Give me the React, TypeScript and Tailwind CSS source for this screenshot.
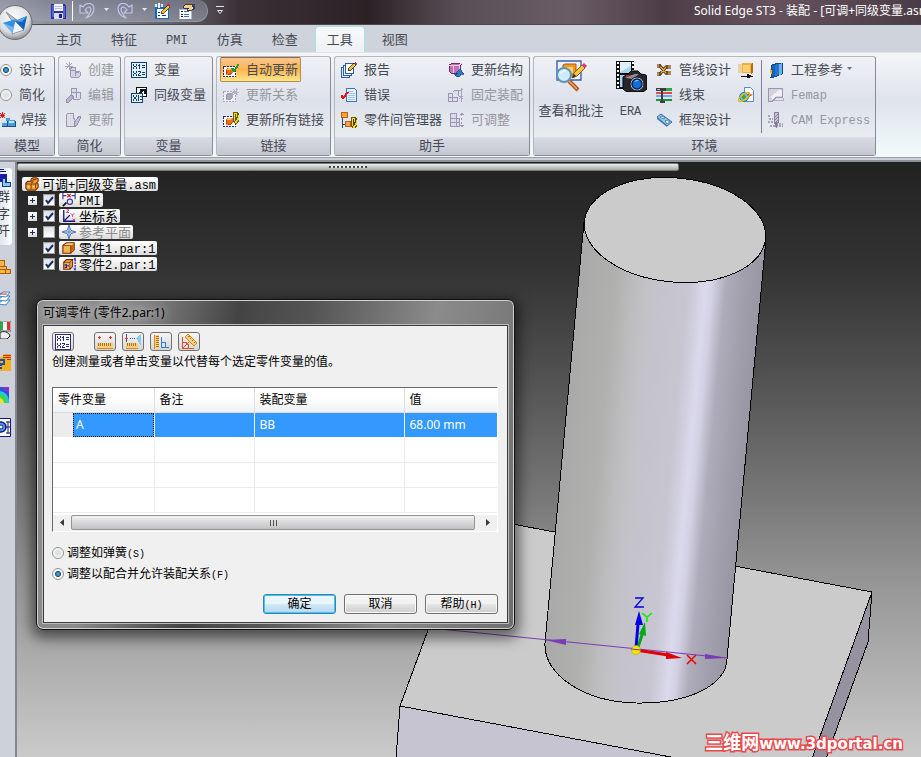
import React from "react";
import clsx from "clsx";

const UI_FONT = "font-['Noto_Sans','Noto_Sans_CJK_SC',sans-serif]";

// Latin runs use a half-width mono face next to the full-width CJK glyphs
const Mixed = ({ text, small }: { text: string; small?: boolean }) => (
  <>
    {text.split(/([\x20-\x7e]+)/).map((part, i) =>
      i % 2 === 1 ? (
        <span key={i} className={clsx("whitespace-pre font-['Liberation_Mono',monospace]", small ? "text-[10px]" : "text-[12px]")}>
          {part}
        </span>
      ) : (
        <React.Fragment key={i}>{part}</React.Fragment>
      )
    )}
  </>
);

const Icon = ({ children, size = 16, box = 16 }: { children: React.ReactNode; size?: number; box?: number }) => (
  <svg
    width={size}
    height={size}
    viewBox={`0 0 ${box} ${box}`}
    shapeRendering={box === 16 && size === 16 ? "crispEdges" : "auto"}
    className="shrink-0"
    fill="none"
    aria-hidden="true"
  >
    {children}
  </svg>
);

/* ---------- quick access icons ---------- */

const SaveIcon = () => (
  <Icon>
    <path d="M1 1h13l2 2v13H1z" fill="#2a30a8" />
    <path d="M2 2h2v12H2zM13 3h2v12h-2z" fill="#5a62d8" />
    <path d="M4 1h9v7H4z" fill="#f4f6ff" />
    <path d="M5 3.500h7M5 5.500h7" stroke="#b9bfe4" />
    <path d="M4 10h9v6H4z" fill="#d9dcf0" />
    <path d="M9 11h3v4H9z" fill="#1c1f86" />
  </Icon>
);

const UndoIcon = ({ flip }: { flip?: boolean }) => (
  <svg width="16" height="16" viewBox="0 0 16 16" fill="none" aria-hidden="true">
    <g transform={flip ? "translate(16 0) scale(-1 1)" : undefined} stroke="#c4c6de" strokeLinejoin="round">
      <path d="M1 2v8h8l-3-3c2-3 5-4 6-1 0 3-1 5-5 9 6-2 8-6 8-10-1-6-8-6-11-1z" fill="#80829f" strokeWidth="1.200" />
    </g>
  </svg>
);

const Caret = ({ className }: { className?: string }) => (
  <svg width="7" height="5" viewBox="0 0 7 5" className={className} aria-hidden="true">
    <path d="M1 0h5L3.500 3z" fill="currentColor" />
  </svg>
);

const SketchListIcon = () => (
  <Icon>
    <path d="M1 4h14v12H1z" fill="#1467c8" />
    <path d="M3 6h11v9H3z" fill="#fff" />
    <path d="M1 1h2v3H1zM4 0h2v5H4zM7 1h2v3H7z" fill="#e4f2fc" />
    <path d="M4 9.500h2M4 12.500h2M8 12.500h4" stroke="#123a7a" />
    <path d="M7 11l1-3 6-6 2 2-6 6z" fill="#f2c443" stroke="#4a2a08" strokeWidth=".8" />
    <path d="M13 2l1-2 2 1v2z" fill="#d92a7a" />
  </Icon>
);

const HandPropsIcon = () => (
  <Icon>
    <path d="M0 6h12v10H0z" fill="#fff" stroke="#a4bce4" />
    <path d="M2 8.500h2M2 11.500h2M2 13.500h2" stroke="#111" strokeWidth="1" />
    <path d="M5 8.500h5M5 11.500h5M5 13.500h5" stroke="#2f6fd6" strokeWidth="1" />
    <path d="M4 4l3-3h6l2 1v4l-4 2-3-1 2-2H5z" fill="#f0cf95" stroke="#3a2a14" strokeWidth=".9" />
    <path d="M13 1h3v5h-2z" fill="#3c3c64" />
  </Icon>
);

/* ---------- ribbon icons ---------- */

const WeldIcon = () => (
  <Icon>
    <path d="M6 4h4v4h5v6H2V9h4z" fill="#4f9ad8" />
    <path d="M6 4h4v2H6zM2 9h5v2H2zM9 9h5v2H9z" fill="#c2e6fb" />
    <path d="M2 14.500h13M7.500 9v5M15.500 9v6" stroke="#1d4f94" />
    <path d="M2.500 0v6M0 3.500h5M0 1l5 5M5 1L0 6" stroke="#e01818" />
  </Icon>
);

const CreateIcon = () => (
  <Icon>
    <path d="M5 7l2-2h3v4h4l1 1v4l-1 1H6z" fill="#d5d2e2" stroke="#9b97b2" />
    <path d="M6 8h4v6M10 10h4" stroke="#9b97b2" />
    <path d="M4 0v8M0 4h8M1 1l6 6M7 1L1 7" stroke="#a7a3bd" />
  </Icon>
);

const EditIcon = () => (
  <Icon>
    <path d="M6 1h5v4h4v7l-5 1-4-3z" fill="#dddaea" stroke="#9b97b2" />
    <path d="M6 5h5v6M11 6l4-1" stroke="#9b97b2" />
    <path d="M1 13l5-5 3 2-5 5-3 1z" fill="#b7b3ca" stroke="#9590ad" />
  </Icon>
);

const RefreshIcon = () => (
  <Icon>
    <path d="M1 3l2-2h5v4l2 3v6H1z" fill="#dddaea" stroke="#9b97b2" />
    <path d="M9 11l5-7 2 1-4 8-3 2z" fill="#c3bfd4" stroke="#9590ad" />
  </Icon>
);

const VariablesIcon = ({ color = "#123c6e", fill = "#dff2fb" }: { color?: string; fill?: string }) => (
  <Icon>
    <path d="M.5.5h15v15H.5z" fill={fill} stroke={color} />
    <g fill={color}>
      <path d="M2 2h1v2H2zM5 2h1v2H5zM3 4h2v1H3zM2 5h1v2H2zM5 5h1v2H5zM8 2h1v5H8zM7 3h1v1H7zM11 3h3v1h-3zM11 5h3v1h-3z" />
      <path d="M2 9h1v2H2zM5 9h1v2H5zM3 11h2v1H3zM2 12h1v2H2zM5 12h1v2H5zM7 9h3v1H7zM9 10h1v1H9zM8 11h1v1H8zM7 12h1v1H7zM7 13h3v1H7zM11 10h3v1h-3zM11 12h3v1h-3z" />
    </g>
  </Icon>
);

const PeerVariablesIcon = () => (
  <Icon>
    <path d="M5.500.5h10v9h-10z" fill="#fff" stroke="#111" />
    <path d="M8 7l4-4M9 2.500h4.500V7" stroke="#111" strokeWidth="2" />
    <path d="M.5 6.500h11v9H.5z" fill="#dff2fb" stroke="#123c6e" />
    <path
      d="M2 8h1v2H2zM5 8h1v2H5zM3 10h2v2H3zM2 12h1v2H2zM5 12h1v2H5zM7 8h1v6H7zM9 9h2v1H9zM9 12h2v1H9z"
      fill="#123c6e"
    />
  </Icon>
);

const LinkCubeIcon = ({ kind }: { kind: "check" | "star" | "chain" }) => {
  const off = kind === "star";
  return (
    <Icon>
      <path d="M.5 4.500h12v10H.5z" stroke={off ? "#a9a5bd" : "#2a2a66"} strokeDasharray="2 1" fill={off ? "#efedf5" : "#fff"} />
      <path d="M3 8l2-2h4v5l-2 2-4-1z" fill={off ? "#a9a5bd" : "#ef6b14"} stroke={off ? "#9590ad" : "#b33c05"} strokeWidth=".7" />
      {!off && <path d="M3 8l2-2h4L7 8z" fill="#ffc36a" />}
      {kind === "check" && <path d="M9 6l2 3 5-7" stroke="#1e9b2c" strokeWidth="2" />}
      {kind === "star" && <path d="M13 1v7M9 5h7M10 2l5 6M15 2l-5 6" stroke="#b3afc6" />}
      {kind === "chain" && (
        <g stroke="#6a5600">
          <path d="M11 0h3l2 3v5l-2 3h-2l-2-3V3z" fill="#f3dc28" />
          <path d="M12 2l2 6M14 2v4M12 5v4" />
        </g>
      )}
    </Icon>
  );
};

const ReportIcon = () => (
  <Icon>
    <path d="M.5 5.500h8v10h-8z" fill="#dcecfb" stroke="#2a5caa" />
    <path d="M2.500 3.500h8v10h-8z" fill="#eef6fd" stroke="#2a5caa" />
    <path d="M4.500 1.500h8v10h-8z" fill="#fff" stroke="#2a5caa" />
    <path d="M7 9l1-3 5-5 2 2-5 5z" fill="#f3c33e" stroke="#222" strokeWidth=".8" />
    <path d="M13 1l1-1 2 2-1 1z" fill="#d12a6a" />
  </Icon>
);

const ErrorsIcon = () => (
  <Icon>
    <path d="M5.500 1.500h8l2 2v11h-10z" fill="#eaf3fd" stroke="#3a74c2" />
    <path d="M7 4.500h5M7 6.500h7M7 8.500h7M7 10.500h7M7 12.500h7" stroke="#9ec2ec" />
    <path d="M0 8l2 3 5-6" stroke="#e21414" strokeWidth="2" />
  </Icon>
);

const InterpartIcon = () => (
  <Icon>
    <path d="M.5.5h6v5h-6zM4.500 9.500h5v5h-5z" fill="#f7a13a" stroke="#c05f08" />
    <path d="M1.500 6v10M2 12.500h2" stroke="#1c3f96" />
    <path d="M11 5h3l2 3v5l-2 3h-2l-2-3V8z" fill="#f3dc28" stroke="#6a5600" />
    <path d="M12 7l2 6M14 7v4M12 10v4" stroke="#4a3c00" />
  </Icon>
);

const UpdateStructIcon = () => (
  <Icon>
    <path d="M1 3l4-2h9l-2 3v7H3L1 9z" fill="#c772b0" stroke="#6b2c72" />
    <path d="M1 3h10l3-2M5 3v8M11 3v8" stroke="#f2c9e6" />
    <path d="M6 11c2 6 6 4 7 1h3l-4-5-4 4h2c-1 2-3 2-4 0z" fill="#2f7ad0" stroke="#123a7a" strokeWidth=".7" />
  </Icon>
);

const FixedAsmIcon = () => (
  <Icon>
    <path d="M.5 6.500h4v4h5v4h-9zM.5 10.500h4v4M5 5l2-2h3v6" stroke="#9b97b2" fill="#dddaea" />
    <path d="M13.500 1v14M11 4l4-2M11 9l4 3M15 9l-4 3" stroke="#a7a3bd" />
  </Icon>
);

const AdjustableIcon = () => (
  <Icon>
    <path d="M2 2l2-1h4v5h3v8H2zM2 6h6v8M2 10h9" stroke="#9b97b2" fill="#dddaea" />
    <path d="M13.500 2v13" stroke="#9b97b2" strokeDasharray="2 2" />
    <path d="M12 3l2-3 2 3zM12 13l2 3 2-3z" fill="#9b97b2" />
  </Icon>
);

const ReviewIcon = () => (
  <Icon size={32} box={32}>
    <path d="M2 1h24v19H2z" fill="#eef2fb" stroke="#3c5fb4" strokeWidth="1.400" />
    <path d="M8 5l2-1h11v9l-2 2H8z" fill="#f29a1c" stroke="#b05a08" />
    <path d="M10 7h8v6h-8z" fill="#ffd27a" />
    <path d="M17 18l2-5 8-8 3 3-8 8z" fill="#f2c443" stroke="#8a5a12" />
    <path d="M27 5l2-2 3 3-2 2z" fill="#e0377c" />
    <path d="M17 18l2-4 2 2z" fill="#222" />
    <path d="M14 21l9 9" stroke="#b2531a" strokeWidth="4" />
    <path d="M14 21l8 8" stroke="#f3a765" strokeWidth="1.500" />
    <circle cx="9" cy="15" r="7" fill="#cfeaf8" stroke="#5f93b8" strokeWidth="2" />
    <path d="M5 14c1-4 5-5 7-3-3 0-5 1-7 3z" fill="#fff" />
  </Icon>
);

const EraIcon = () => (
  <Icon size={32} box={32}>
    <path d="M1 1h18v28H1z" fill="#111" />
    <path d="M5 2h11v11H5zM5 15h11v12H5z" fill="#a8d4f4" />
    <path d="M5 2h11v4L5 12z" fill="#dff0fc" />
    <path d="M3 2v27M18 2v27" stroke="#fff" strokeWidth="2" strokeDasharray="2 2" />
    <path d="M8 17l5-3 3-3h7l3 3 5 1 1 3v11l-4 3H12l-4-3z" fill="#26262a" stroke="#000" />
    <path d="M10 18l4-2 6-2h4l-6 5z" fill="#8d8f96" />
    <path d="M11 16h3" stroke="#d22" strokeWidth="2" />
    <circle cx="22" cy="24" r="7" fill="#c9ccd2" stroke="#111" />
    <circle cx="22" cy="24" r="5" fill="#0f6fd6" stroke="#06245c" strokeWidth="1.500" />
    <path d="M19 22c1-2 4-2 5-1-2 0-4 0-5 1z" fill="#bfe6ff" />
  </Icon>
);

const PipingIcon = () => (
  <svg width="16" height="16" viewBox="0 0 16 16" fill="none" className="shrink-0" aria-hidden="true">
    <path d="M1 4h3l6 7h5M1 12h3l6-7h5" stroke="#3a2004" strokeWidth="3" />
    <path d="M1 4h3l6 7h5M1 12h3l6-7h5" stroke="#f0a848" strokeWidth="1.400" />
    <path d="M4 2v3M11 3v4M11 9v4M4 10v4" stroke="#2a1804" />
  </svg>
);

const HarnessIcon = () => (
  <Icon>
    <path d="M6 1h10v3H6z" fill="#2aa84a" />
    <path d="M0 5h16v2H0z" fill="#e84a4a" />
    <path d="M0 8h16v2H0z" fill="#6aaef0" />
    <path d="M0 12h16v2H0z" fill="#1d8f36" />
    <path d="M0 1h10v3H7v10h2v2H4v-2h1V4H0z" fill="#3a3e40" />
    <path d="M1 2h3v1H1z" fill="#b8bcc0" />
  </Icon>
);

const FrameIcon = () => (
  <svg width="16" height="16" viewBox="0 0 16 16" fill="none" className="shrink-0" aria-hidden="true">
    <path d="M1 5l4-3 11 8-5 4z" fill="#9cc8e8" stroke="#2f6ea8" />
    <path d="M1 5v2l10 8v-2z" fill="#3a7cb8" />
    <path d="M4 5l2-1 3 2-2 1zM9 9l2-1 3 2-3 2z" fill="#f2faff" stroke="#2f6ea8" strokeWidth=".8" />
  </svg>
);

const ExplodeIcon = () => (
  <Icon>
    <path d="M0 2h10v9H0z" fill="#ead2a8" />
    <path d="M4 1h10v10H4z" fill="#f2b040" />
    <path d="M5 3h7v7H5z" fill="#fbd070" />
    <path d="M13 2l2-2v10l-2 2z" fill="#b96a10" />
    <path d="M3 14.500h9M9 12l5 2.500-5 1.500z" stroke="#111" fill="#111" strokeWidth="1" />
  </Icon>
);

const WebIcon = () => (
  <svg width="16" height="16" viewBox="0 0 16 16" fill="none" className="shrink-0" aria-hidden="true">
    <path d="M6.500.5h6l3 3v11h-9z" fill="#fff" stroke="#5a86c6" />
    <path d="M11 5l1 2 3 1-3 1-1 2-1-2-2-1 2-1z" fill="#d02828" />
    <circle cx="6" cy="10" r="4.500" fill="#5cc4e8" stroke="#2a76b0" />
    <path d="M3 8l3-1 2 3-2 3-2-2z" fill="#3aa63a" />
    <ellipse cx="6" cy="10" rx="6.500" ry="2.500" transform="rotate(-35 6 10)" stroke="#e8b818" strokeWidth="1.500" />
  </svg>
);

const HandbookIcon = () => (
  <Icon>
    <path d="M4 3l7-2h3v11l-8 3H3z" fill="#2275cc" stroke="#124a92" />
    <path d="M4 3h3v12H4z" fill="#1a5fb4" />
    <path d="M11 2l3-1v11l-3 1z" fill="#6cb2ee" />
    <path d="M2 7l2 2v4l-2-2z" fill="#f2b41c" />
  </Icon>
);

const FemapIcon = () => (
  <Icon>
    <path d="M.5 1.500h14v9H8l-4 4H.5z" fill="#d4d0de" stroke="#9b97b2" />
    <path d="M3 9l8-6h3v6H8l-4 4z" fill="#f1eff6" />
    <path d="M6 13.500h9V11" stroke="#b3afc6" />
  </Icon>
);

const CamIcon = () => (
  <Icon>
    <path d="M6.500.5h4v10h-4z" fill="#c9c5d8" stroke="#86829c" />
    <path d="M6 5l5-3M6 8l5-3M6 11l5-3" stroke="#86829c" />
    <path d="M0 3.500h3M1 6.500h4M0 9.500h5M11 11.500h4M2 13.500h13" stroke="#a7a3bd" strokeWidth="2" strokeDasharray="2 1" />
    <path d="M6 10h5l-2 6H8z" fill="#86829c" />
  </Icon>
);

/* ---------- tree icons ---------- */

const AsmIcon = () => (
  <Icon size={14}>
    <path d="M1 7l2-2h4V2l2-1h4l2 1v3l-2 2 2 1v4l-3 3H3l-2-2z" fill="#f0a030" stroke="#7a2e06" strokeWidth="1.300" />
    <path d="M1 8h6v6M7 8h6M9 3h4M7 7l2-1V3M12 8v5" stroke="#7a2e06" />
    <path d="M3 10h2v2H3zM9 10h2v2H9z" fill="#ffd98a" />
  </Icon>
);

const PmiIcon = () => (
  <Icon size={14}>
    <path d="M1 0v7M15 0v7M1 3h4M11 3h4" stroke="#3a3aa0" strokeWidth="1.300" />
    <path d="M6 1l4 4M10 1L6 5" stroke="#d01818" strokeWidth="1.300" />
    <circle cx="9" cy="10" r="3" stroke="#3a3aa0" strokeWidth="1.300" />
    <path d="M1 15l4-4" stroke="#111" strokeWidth="2" />
  </Icon>
);

const AxesIcon = () => (
  <Icon size={14}>
    <path d="M2 1v13h13" stroke="#14147a" strokeWidth="1.500" />
    <path d="M2 14l7-7" stroke="#14147a" strokeWidth="1.500" />
    <path d="M5 1h3L5 4h3" stroke="#c02878" />
    <path d="M10 5l2 2 2-2M12 7v2M12 11l3 3M15 11l-3 3" stroke="#c02878" />
  </Icon>
);

const PlanesIcon = () => (
  <Icon size={14}>
    <path d="M8 0l2 6 6 2-6 2-2 6-2-6-6-2 6-2z" fill="#d8ecfb" stroke="#4a72b4" />
    <path d="M8 1v14M1 8h14" stroke="#4a72b4" />
  </Icon>
);

const PartIcon = ({ adjustable }: { adjustable?: boolean }) =>
  adjustable ? (
    <Icon size={14}>
      <path d="M2 6l3-3h7v8l-3 3H2z" fill="#f6b44a" stroke="#7a2e06" strokeWidth="1.300" />
      <path d="M2 6h7v8M9 6l3-3" stroke="#7a2e06" />
      <path d="M3 9h2v3H3M5 10h3" stroke="#1c1ca8" strokeWidth="1.300" />
      <path d="M15 3v10" stroke="#1c1ca8" strokeWidth="1.500" strokeDasharray="2 1" />
      <path d="M13 3l2-3 1 3zM13 13l2 3 1-3z" fill="#1c1ca8" />
    </Icon>
  ) : (
    <Icon size={14}>
      <path d="M1 5l4-3h9v8l-4 4H1z" fill="#f6b44a" stroke="#7a2e06" strokeWidth="1.300" />
      <path d="M10 5l4-3v8l-4 4z" fill="#c86a14" />
      <path d="M2 5l3-2h8l-3 2z" fill="#fff0c0" />
      <path d="M1 5h9v9" stroke="#7a2e06" />
    </Icon>
  );

/* ---------- dialog icons ---------- */

const RulerTool = ({ kind }: { kind: "line" | "normal" | "min" | "angle" }) => (
  <Icon>
    {kind === "line" && (
      <>
        <path d="M0 9h16v6H0z" fill="#f8d080" />
        <path d="M0 14.500h16" stroke="#d28a1c" />
        <path d="M1.500 9v3M3.500 9v3M5.500 9v3M7.500 9v3M9.500 9v3M11.500 9v3M13.500 9v3" stroke="#b0701c" />
        <path d="M1 3.500h3M2.500 2v3M12 3.500h3M13.500 2v3" stroke="#e0382c" />
      </>
    )}
    {kind === "normal" && (
      <>
        <path d="M1 9h12v6H1z" fill="#f8d080" />
        <path d="M1 14.500h12" stroke="#d28a1c" />
        <path d="M2.500 9v3M4.500 9v3M6.500 9v3M8.500 9v3M10.500 9v3" stroke="#b0701c" />
        <path d="M1.500 0v8M5 4.500h1M7 4.500h1M9 4.500h1" stroke="#2a50b4" />
        <path d="M0 4.500h3M1.500 3v3" stroke="#e0382c" />
        <path d="M11 4l5-4v12z" fill="#8cc8f0" />
      </>
    )}
    {kind === "min" && (
      <>
        <path d="M1 1h5v14H1z" fill="#f8d080" />
        <path d="M1.500 1v14" stroke="#d28a1c" />
        <path d="M3 2.500h3M3 4.500h3M3 6.500h3M3 8.500h3M3 10.500h3M3 12.500h3" stroke="#b0701c" />
        <path d="M8.500 3v11M8 13.500h8M9 8.500h3.500V13" stroke="#2f7fd0" />
      </>
    )}
    {kind === "angle" && (
      <>
        <path d="M4 3l3-3 9 9-3 3z" fill="#f8d080" stroke="#d28a1c" />
        <path d="M7 2l2 1M9 4l1 1M11 6l1 1M13 8l1 1" stroke="#b0701c" />
        <path d="M1.500 3v12M1 14.500h12M2 8c4 0 6 2 6 6M2 14l6-6" stroke="#e0502c" />
      </>
    )}
  </Icon>
);

/* ---------- ribbon ---------- */

interface RibbonItemProps {
  icon: React.ReactNode;
  label?: string;
  disabled?: boolean;
  active?: boolean;
  caret?: boolean;
}

const RibbonItem = ({ icon, label, disabled, active, caret }: RibbonItemProps) => (
  <button
    type="button"
    disabled={disabled}
    aria-label={label ?? "工具"}
    className={clsx(
      "flex h-[25px] items-center gap-[7px] whitespace-nowrap rounded-[2px] border pl-[2px] pr-[2px]",
      active
        ? "border-[#b98a4e] border-t-[#8f6c41] bg-linear-to-b from-[#f9c592] via-[#fdb44e] to-[#fee88a]"
        : "border-transparent",
      disabled ? "text-[#96979d]" : "text-[#464a54]"
    )}
  >
    {icon}
    {label && (
      <span>
        <Mixed text={label} />
      </span>
    )}
    {caret && <Caret className="-ml-1 text-[#70747e]" />}
  </button>
);

const RibbonGroup = ({ title, className, children }: { title: string; className?: string; children: React.ReactNode }) => (
  <section
    className={clsx(
      "flex shrink-0 flex-col rounded-[3px] border border-[#b4b7bf] border-b-[#8b8c92] border-r-[#8b8c92] bg-linear-to-b from-[#eff1f5] via-[#dde1ea] via-45% to-[#eef2f3]",
      className
    )}
  >
    <div className="flex h-20">{children}</div>
    <h2 className="h-[18px] bg-linear-to-b from-[#d9dce4] to-[#c4c7d1] text-center leading-4 text-[#464a54]">{title}</h2>
  </section>
);

const RADIO =
  "m-0 size-3 shrink-0 appearance-none rounded-full border border-[#8e8f8f] bg-[radial-gradient(circle,#dfe1e4_30%,#ffffff_75%)] checked:bg-[radial-gradient(circle,#5fc0f0_0%,#14507e_38%,#f4f4f4_45%,#ffffff_75%)]";

const tabs = ["主页", "特征", "PMI", "仿真", "检查", "工具", "视图"];

const TitleBar = () => (
  <header className="relative flex h-[25px] items-start justify-between overflow-hidden border-b border-[#4a4a4e] bg-[linear-gradient(90deg,#b9bbc4_0%,#8d8f9b_5%,#777a88_13%,#5a5660_21%,#3a3036_26%,#2c2226_40%,#5a4f56_50%,#6a5c64_62%,#4d3d47_72%,#66525f_84%,#4a3c46_100%)]">
    <div className="flex h-[22px] items-center rounded-r-full border-b border-r border-[#9295a0] bg-linear-to-b from-[#7d8090]/60 to-[#9ea2ae]/60 pl-[50px] pr-3">
      <button type="button" aria-label="保存"><SaveIcon /></button>
      <span className="ml-[6px] h-5 w-px bg-white" />
      <button type="button" aria-label="撤销" className="ml-[6px]"><UndoIcon /></button>
      <Caret className="ml-2 text-[#e4e6ec]" />
      <button type="button" aria-label="重做" className="ml-[7px]"><UndoIcon flip /></button>
      <Caret className="ml-2 text-[#e4e6ec]" />
      <button type="button" aria-label="草图" className="ml-[6px]"><SketchListIcon /></button>
      <button type="button" aria-label="属性" className="ml-[9px]"><HandPropsIcon /></button>
    </div>
    <button type="button" aria-label="自定义" className="ml-2 mt-[6px]">
      <svg width="8" height="9" viewBox="0 0 8 9" fill="none" stroke="#e4e4e8">
        <path d="M0 .5h8M1.500 4.500h5l-2.500 3z" />
      </svg>
    </button>
    <h1 className="h-[22px] min-w-0 flex-1 whitespace-nowrap pl-[470px] text-[12px] leading-[22px] text-white">
      Solid Edge ST3 - 装配 - [可调+同级变量.asm]
    </h1>
  </header>
);

const AppOrb = () => (
  <button type="button" aria-label="应用程序菜单" className="absolute -left-[3px] top-[4px]">
    <svg width="37" height="37" viewBox="0 0 37 37" fill="none">
      <defs>
        <radialGradient id="orb" cx=".45" cy=".35" r=".65">
          <stop offset="0" stopColor="#ffffff" />
          <stop offset=".7" stopColor="#dcdde0" />
          <stop offset="1" stopColor="#8f9094" />
        </radialGradient>
      </defs>
      <circle cx="18" cy="18.500" r="17" fill="url(#orb)" stroke="#6c6d72" />
      <path d="M9 8l11 8-3 4z" fill="#b9bcc2" stroke="#74777e" strokeWidth=".7" />
      <path d="M6 19l12-3-3 13z" fill="#6db8f4" />
      <path d="M6 19l13-4-3 8z" fill="#2f8ee6" />
      <path d="M18 17l9 9-12 4z" fill="#eef5fc" stroke="#5b7ea6" strokeWidth=".7" />
      <path d="M18 17l12-5-3 14z" fill="#1560b8" />
      <path d="M18 17l12-5-5 6z" fill="#4aa4f0" />
    </svg>
  </button>
);

const Ribbon = () => (
  <div className="flex gap-[3px] overflow-hidden border-b border-[#9a9da4] bg-linear-to-b from-[#f4f6f8] via-[#dfe3ea] via-45% to-[#f2fbfb] pb-px pt-[3px]">
    <RibbonGroup title="模型" className="w-[55px] rounded-l-none border-l-0">
      <div className="flex flex-col">
        <label className="flex h-[25px] items-center gap-[7px] text-[#464a54]">
          <input type="radio" name="mode" defaultChecked className={RADIO} />
          设计
        </label>
        <label className="flex h-[25px] items-center gap-[7px] text-[#464a54]">
          <input type="radio" name="mode" className={RADIO} />
          简化
        </label>
        <button type="button" className="flex h-[25px] items-center gap-[5px] whitespace-nowrap text-[#464a54]">
          <WeldIcon />
          焊接
        </button>
      </div>
    </RibbonGroup>
    <RibbonGroup title="简化" className="w-[63px]">
      <div className="flex flex-col pl-[3px]">
        <RibbonItem icon={<CreateIcon />} label="创建" disabled />
        <RibbonItem icon={<EditIcon />} label="编辑" disabled />
        <RibbonItem icon={<RefreshIcon />} label="更新" disabled />
      </div>
    </RibbonGroup>
    <RibbonGroup title="变量" className="w-[89px]">
      <div className="flex flex-col pl-[3px]">
        <RibbonItem icon={<VariablesIcon />} label="变量" />
        <RibbonItem icon={<PeerVariablesIcon />} label="同级变量" />
      </div>
    </RibbonGroup>
    <RibbonGroup title="链接" className="w-[115px]">
      <div className="flex flex-col items-start pl-[3px]">
        <RibbonItem icon={<LinkCubeIcon kind="check" />} label="自动更新" active />
        <RibbonItem icon={<LinkCubeIcon kind="star" />} label="更新关系" disabled />
        <RibbonItem icon={<LinkCubeIcon kind="chain" />} label="更新所有链接" />
      </div>
    </RibbonGroup>
    <RibbonGroup title="助手" className="w-[196px]">
      <div className="flex w-[107px] flex-col pl-[3px]">
        <RibbonItem icon={<ReportIcon />} label="报告" />
        <RibbonItem icon={<ErrorsIcon />} label="错误" />
        <RibbonItem icon={<InterpartIcon />} label="零件间管理器" />
      </div>
      <div className="flex flex-col pl-[3px]">
        <RibbonItem icon={<UpdateStructIcon />} label="更新结构" />
        <RibbonItem icon={<FixedAsmIcon />} label="固定装配" disabled />
        <RibbonItem icon={<AdjustableIcon />} label="可调整" disabled />
      </div>
    </RibbonGroup>
    <RibbonGroup title="环境" className="w-[343px]">
      <button type="button" className="flex w-[74px] flex-col items-center pt-[3px] text-[#464a54]">
        <ReviewIcon />
        <span className="mt-2 whitespace-nowrap leading-[20px]">查看和批注</span>
      </button>
      <button type="button" className="flex w-[45px] flex-col items-center pt-[3px] text-[#464a54]">
        <EraIcon />
        <span className="mt-2 leading-[20px]"><Mixed text="ERA" /></span>
      </button>
      <div className="flex w-[82px] flex-col">
        <RibbonItem icon={<PipingIcon />} label="管线设计" />
        <RibbonItem icon={<HarnessIcon />} label="线束" />
        <RibbonItem icon={<FrameIcon />} label="框架设计" />
      </div>
      <div className="flex flex-col">
        <RibbonItem icon={<ExplodeIcon />} />
        <RibbonItem icon={<WebIcon />} />
      </div>
      <div className="ml-1 mt-[3px] h-[73px] w-px bg-[#7b7e9c]" />
      <div className="flex flex-col pl-[3px]">
        <RibbonItem icon={<HandbookIcon />} label="工程参考" caret />
        <RibbonItem icon={<FemapIcon />} label="Femap" disabled />
        <RibbonItem icon={<CamIcon />} label="CAM Express" disabled />
      </div>
    </RibbonGroup>
  </div>
);

/* ---------- edge bar ---------- */

const EdgeBar = () => (
  <nav className="flex w-[17px] shrink-0 flex-col items-start overflow-hidden border-r-2 border-[#84868c] bg-[#cdd1da] pt-[5px]">
    <button type="button" className="flex h-[79px] w-[13px] flex-col items-end overflow-hidden rounded-r-[4px] border border-l-0 border-[#b9d6e0] bg-linear-to-r from-[#dfe5ef] to-white text-[#3c4048]">
      <svg width="12" height="20" viewBox="0 0 12 20" className="shrink-0" fill="none" shapeRendering="crispEdges" aria-hidden="true">
        <path d="M0 1.500h4M0 3.500h6" stroke="#16167a" />
        <path d="M0 6h7v8H0z" fill="#1c1ca0" />
        <path d="M2.500 10.500h3v4h5v4h-8z" fill="#8cc4f4" stroke="#123a8a" />
      </svg>
      <span className="w-[17px] text-[13px] leading-[17px]">群字阡</span>
    </button>
    <div className="flex flex-col gap-[15px] pt-[13px]">
      <svg width="11" height="16" viewBox="0 0 11 16" fill="#f6b44a" stroke="#b05a08" shapeRendering="crispEdges" aria-hidden="true">
        <path d="M-1 1.500h5v6h2v3h4v4H-1zM0 7.500h6M0 10.500h10M5.500 11v4" />
      </svg>
      <svg width="11" height="16" viewBox="0 0 11 16" fill="#fff" stroke="#3a86c8" aria-hidden="true">
        <path d="M-2 14l5-4h7l-4 5z" />
        <path d="M-2 10l5-4h7l-4 5z" />
        <path d="M-2 6l5-4h7l-4 5z" />
        <path d="M0 4h7" stroke="#e02020" />
      </svg>
      <svg width="11" height="18" viewBox="0 0 11 18" aria-hidden="true">
        <path d="M0 0h11v10H0z" fill="#fff" stroke="#555" />
        <path d="M0 1h3v8H0z" fill="#2aa84a" />
        <path d="M7 1h3v8H7z" fill="#e0302c" />
        <path d="M0 12c3-3 9-1 10 3l-3 3H0z" fill="#eee" stroke="#222" />
      </svg>
      <svg width="11" height="18" viewBox="0 0 11 18" fill="none" shapeRendering="crispEdges" aria-hidden="true">
        <path d="M3 0h8v17H0V3h3z" fill="#f5b021" />
        <path d="M3 1.500h8M3 3.500h8M7 5.500h4" stroke="#c4341c" />
        <path d="M0 6h4v4H1v2M1 13v2" stroke="#1c50a8" strokeWidth="2" />
      </svg>
      <svg width="9" height="16" viewBox="0 0 9 16" aria-hidden="true">
        <path d="M0 0h9v16H0z" fill="#2a50d8" />
        <circle cx="-1" cy="14" r="10" fill="#28c8e8" />
        <circle cx="-1" cy="15" r="8" fill="#3ad84a" />
        <circle cx="-1" cy="16" r="5" fill="#f0e030" />
        <path d="M2 0h7v6z" fill="#9a28c8" />
      </svg>
      <svg width="11" height="19" viewBox="0 0 11 19" fill="none" stroke="#14147a" aria-hidden="true">
        <path d="M0 .5h10.500v18H0" fill="#fff" />
        <circle cx="1" cy="9" r="5" fill="#4aa4e0" strokeWidth="1.500" />
        <circle cx="1" cy="9" r="2" fill="#fff" />
        <path d="M8 3v13M6 4h4M6 15h4M6 9h4" />
      </svg>
    </div>
  </nav>
);

/* ---------- path finder tree ---------- */

interface TreeNode {
  label: string;
  icon: React.ReactNode;
  expandable?: boolean;
  checked?: boolean;
}

const nodes: TreeNode[] = [
  { label: "PMI", icon: <PmiIcon />, expandable: true, checked: true },
  { label: "坐标系", icon: <AxesIcon />, expandable: true, checked: true },
  { label: "参考平面", icon: <PlanesIcon />, expandable: true },
  { label: "零件1.par:1", icon: <PartIcon />, checked: true },
  { label: "零件2.par:1", icon: <PartIcon adjustable />, checked: true },
];

const TREE_LABEL = "flex h-[14px] items-center gap-[3px] whitespace-nowrap rounded-[2px] bg-linear-to-b from-white to-[#dcdcdc] pl-[3px] pr-[2px] leading-[14px]";

const PathFinder = () => (
  <div className="relative px-[5px] pt-[5px] text-[13px] text-black">
    <div className="flex h-4 items-center">
      <span className={TREE_LABEL}>
        <AsmIcon />
        <span className="h-[14px]"><Mixed text="可调+同级变量.asm" /></span>
      </span>
    </div>
    <ul>
      {nodes.map((node) => (
        <li key={node.label} className="flex h-4 items-center pl-[6px]">
          {node.expandable ? (
            <button type="button" aria-label={`展开 ${node.label}`} className="flex size-[9px] items-center justify-center bg-linear-to-b from-white to-[#d8d8d8]">
              <svg width="7" height="7" viewBox="0 0 7 7" stroke="#1c2c5c"><path d="M1 3.500h5M3.500 1v5" /></svg>
            </button>
          ) : (
            <span className="w-[9px]" />
          )}
          <label className="ml-[6px] flex items-center gap-[4px]">
            <span className="grid size-[12px] *:[grid-area:1/1]">
              <input
                type="checkbox"
                defaultChecked={node.checked}
                className="peer m-0 size-[12px] appearance-none border border-[#9a9c9e] bg-linear-to-b from-[#dcdfe4] to-white"
              />
              <svg viewBox="0 0 12 12" className="pointer-events-none invisible size-[12px] peer-checked:visible" fill="none">
                <path d="M3 6l2 3 5-6" stroke="#1c2f6a" strokeWidth="2" />
              </svg>
            </span>
            <span className={clsx(TREE_LABEL, node.checked ? "text-black" : "text-[#8a8a8a]")}>
              {node.icon}
              <span className="h-[14px]"><Mixed text={node.label} /></span>
            </span>
          </label>
        </li>
      ))}
    </ul>
  </div>
);

/* ---------- 3D scene ---------- */

const Scene = () => (
  <svg className="absolute inset-0 size-full" fill="none" aria-label="装配模型">
    <defs>
      <linearGradient id="body" gradientUnits="userSpaceOnUse" x1="564" y1="434" x2="745" y2="451">
        <stop offset="0" stopColor="#a9a9a9" />
        <stop offset=".2" stopColor="#b0b0af" />
        <stop offset=".32" stopColor="#bebec0" />
        <stop offset=".42" stopColor="#c4c3cb" />
        <stop offset=".6" stopColor="#c7c5d1" />
        <stop offset=".7" stopColor="#dbd9ec" />
        <stop offset=".74" stopColor="#d2d0e2" />
        <stop offset=".81" stopColor="#aeabba" />
        <stop offset=".92" stopColor="#a19eac" />
        <stop offset="1" stopColor="#9a97a5" />
      </linearGradient>
    </defs>
    <g transform="translate(-17 -162)">
      <g stroke="#000" strokeLinejoin="round" shapeRendering="crispEdges">
        <path d="M872 592l-4 50-44 122h-15z" fill="#9692a0" />
        <path d="M470 516l402 76-62 172H700L400 706z" fill="#cbcbcb" />
        <path d="M400 706l308 58v8H395z" fill="#c6c4d0" />
        <path d="M584 222l-39 421c-2 32 40 59 91 60 51 1 90-17 91-44l39-421z" fill="url(#body)" />
        <ellipse cx="675" cy="230" rx="91" ry="52" transform="rotate(5.500 675 230)" fill="#cbcbcb" />
      </g>
      <path d="M440 629L727 658" stroke="#7a3cb4" />
      <path d="M545 640l21-1v6zM727 658l-22-4v5z" fill="#7a3cb4" />
      <path d="M636 650l32 5" stroke="#e00000" strokeWidth="3" />
      <path d="M682 658l-16-6v7z" fill="#e00000" />
      <path d="M638 647l5-15" stroke="#00a818" strokeWidth="3" />
      <path d="M645 622l-6 12 7 2z" fill="#00a818" />
      <path d="M636 648l2-24" stroke="#0000e6" strokeWidth="3" />
      <path d="M639 611l-4 14h8z" fill="#0000e6" />
      <circle cx="636" cy="650" r="4.500" fill="#f2e400" stroke="#b8a800" strokeWidth=".6" />
      <path d="M631 649l10 1" stroke="#7a3cb4" />
      <path d="M635 598h8l-8 9h9" stroke="#0000f0" strokeWidth="1.300" />
      <path d="M642 613l5 4 5-4M647 617v5" stroke="#00f000" strokeWidth="1.500" />
      <path d="M687 655l9 9M696 655l-9 9" stroke="#f00000" strokeWidth="1.500" />
    </g>
  </svg>
);

/* ---------- dialog ---------- */

const TOOL_BTN =
  "flex h-[19px] w-[22px] items-center justify-center rounded-[3px] border border-[#707070] bg-linear-to-b from-[#f6f6f6] to-[#d6d6d6]";
const DIALOG_BTN = "h-5 w-[73px] rounded-[3px] border text-[12px] leading-[18px]";
const DIALOG_BTN_PLAIN = "border-[#707070] bg-linear-to-b from-[#f3f3f3] from-45% via-[#e2e2e2] via-55% to-[#cfcfcf] shadow-[inset_0_0_0_1px_#fafafa]";

const columns = ["零件变量", "备注", "装配变量", "值"];

const AdjustablePartDialog = () => (
  <div
    role="dialog"
    aria-labelledby="dlg-title"
    className="absolute left-[19px] top-[137px] w-[479px] rounded-[7px] border border-[#111] bg-[linear-gradient(100deg,#8c8c8c_0%,#8a8a8a_18%,#444_38%,#555_52%,#8b8b8b_75%,#6e6e6e_100%)] px-[6px] pb-[6px] text-[12px] text-black shadow-[inset_0_0_0_1px_#d0d0d0,0_4px_14px_4px_rgba(0,0,0,0.550)]"
  >
    <h2 id="dlg-title" className="h-[25px] leading-[25px] [text-shadow:0_0_8px_#fff]">
      可调零件 (零件2.par:1)
    </h2>
    <div className="border border-[#3a3a3a] bg-[#f0f0f0] pb-[8px] pl-[8px] pr-[9px] pt-[6px] outline outline-[#bdbdbd]">
      <div className="flex gap-[6px]">
        <button type="button" aria-label="变量" className={clsx(TOOL_BTN, "mr-[14px]")}><VariablesIcon color="#2a2a78" fill="#fff" /></button>
        <button type="button" aria-label="测量距离" className={TOOL_BTN}><RulerTool kind="line" /></button>
        <button type="button" aria-label="法向距离" className={TOOL_BTN}><RulerTool kind="normal" /></button>
        <button type="button" aria-label="最小距离" className={TOOL_BTN}><RulerTool kind="min" /></button>
        <button type="button" aria-label="测量角度" className={TOOL_BTN}><RulerTool kind="angle" /></button>
      </div>
      <p className="mt-[2px] whitespace-nowrap leading-[18px]">创建测量或者单击变量以代替每个选定零件变量的值。</p>

      <div className="mt-4 border border-[#fff] border-l-[#696969] border-t-[#696969] bg-white">
        <table className="w-full table-fixed border-collapse text-left">
          <colgroup>
            <col className="w-[101px]" />
            <col className="w-[100px]" />
            <col className="w-[150px]" />
            <col />
          </colgroup>
          <thead>
            <tr className="h-6 bg-linear-to-b from-white from-40% to-[#eff1f3]">
              {columns.map((c) => (
                <th key={c} scope="col" className="border-b border-r border-[#dcdee2] p-0 pl-[5px] font-normal leading-[22px] last:border-r-0">{c}</th>
              ))}
            </tr>
          </thead>
          <tbody>
            <tr className="h-[25px] bg-[#3399ff] text-white">
              <td className="border-r border-[#f0f0f0] bg-[#ececec] p-0 pl-5">
                <div className="h-[24px] border border-dotted border-[#1a1a1a] bg-[#3399ff] pl-[2px] leading-[22px]">A</div>
              </td>
              <td className="border-r border-[#f0f0f0] p-0" />
              <td className="border-r border-[#f0f0f0] p-0 pl-[5px]">BB</td>
              <td className="p-0 pl-[5px]">68.00 mm</td>
            </tr>
            {[0, 1, 2].map((r) => (
              <tr key={r} className="h-[25px] border-b border-[#ececec]">
                {columns.map((c) => (
                  <td key={c} className="border-r border-[#ececec] p-0 last:border-r-0" />
                ))}
              </tr>
            ))}
          </tbody>
        </table>
        <div className="mt-[2px] flex h-4 items-center bg-[#f0f0f0]">
          <button type="button" aria-label="向左滚动" className="flex w-[18px] justify-center">
            <svg width="4" height="7" viewBox="0 0 4 7"><path d="M4 0v7L0 3.500z" fill="#3a3a3a" /></svg>
          </button>
          <div className="flex h-[15px] flex-1 items-center justify-center gap-[2px] rounded-[2px] border border-[#959595] bg-linear-to-b from-[#f2f2f2] via-[#d8d8d8] to-[#c2c3c6]">
            <span className="h-[6px] w-px bg-[#555]" />
            <span className="h-[6px] w-px bg-[#555]" />
            <span className="h-[6px] w-px bg-[#555]" />
          </div>
          <button type="button" aria-label="向右滚动" className="flex w-[22px] justify-center pl-1">
            <svg width="4" height="7" viewBox="0 0 4 7"><path d="M0 0v7l4-3.500z" fill="#3a3a3a" /></svg>
          </button>
        </div>
      </div>

      <div className="mt-3 flex flex-col items-start gap-[3px]">
        <label className="flex h-[18px] items-center gap-[3px] whitespace-nowrap">
          <input type="radio" name="adjust" className={RADIO} />
          <span><Mixed small text="调整如弹簧(S)" /></span>
        </label>
        <label className="flex h-[18px] items-center gap-[3px] whitespace-nowrap">
          <input type="radio" name="adjust" defaultChecked className={RADIO} />
          <span><Mixed small text="调整以配合并允许装配关系(F)" /></span>
        </label>
      </div>

      <div className="mt-[11px] flex justify-end gap-2">
        <button type="button" className={clsx(DIALOG_BTN, "border-[#3c7fb1] bg-linear-to-b from-[#eaf6fd] from-45% via-[#cfe6f4] via-55% to-[#b4d8ee] shadow-[inset_0_0_0_1px_#3cc8f4]")}>确定</button>
        <button type="button" className={clsx(DIALOG_BTN, DIALOG_BTN_PLAIN)}>取消</button>
        <button type="button" className={clsx(DIALOG_BTN, DIALOG_BTN_PLAIN)}><Mixed small text="帮助(H)" /></button>
      </div>
    </div>
  </div>
);

export default function App() {
  return (
    <div className={clsx("relative flex h-screen flex-col overflow-hidden bg-[#cfd3db] text-[13px]", UI_FONT)}>
      <TitleBar />
      <AppOrb />
      <nav className="flex h-[28px] items-end gap-[5px] border-b border-[#dfe2e8] pl-11 text-[#464a54]">
        {tabs.map((tab) => (
          <button
            key={tab}
            type="button"
            className={clsx(
              "h-[26px] rounded-t-[4px] border border-b-0 px-[11px] leading-[25px]",
              tab === "工具" ? "border-[#a9e0e4] bg-linear-to-b from-[#f8f9fb] to-[#eef1f5]" : "border-transparent"
            )}
          >
            <Mixed text={tab} />
          </button>
        ))}
      </nav>
      <Ribbon />
      <div className="h-1 border-b-2 border-[#8f9299] bg-[#cdd1da]" />
      <main className="flex min-h-0 flex-1">
        <EdgeBar />
        <div className="relative min-w-0 flex-1 overflow-hidden bg-[linear-gradient(180deg,#222_0%,#333_18%,#555_38%,#777_56%,#989898_72%,#cacaca_100%)]">
          <Scene />
          <div className="relative mt-px flex h-2 w-[662px] items-center justify-center rounded-[2px] border border-[#777] bg-linear-to-b from-[#eee] to-[#a8a8a8]">
            <span className="h-[2px] w-[38px] bg-[repeating-linear-gradient(90deg,#444_0_2px,#e8e8e8_2px_4px)]" />
          </div>
          <PathFinder />
          <AdjustablePartDialog />
          <p className="absolute bottom-0 right-[18px] whitespace-nowrap font-['DejaVu_Sans','Noto_Sans_CJK_SC',sans-serif] text-[15px] font-bold leading-[26px] text-white [paint-order:stroke_fill] [-webkit-text-stroke:3px_#e84a4e]">
            <span className="text-[18px]">三维网</span>www.3dportal.cn
          </p>
        </div>
      </main>
    </div>
  );
}
